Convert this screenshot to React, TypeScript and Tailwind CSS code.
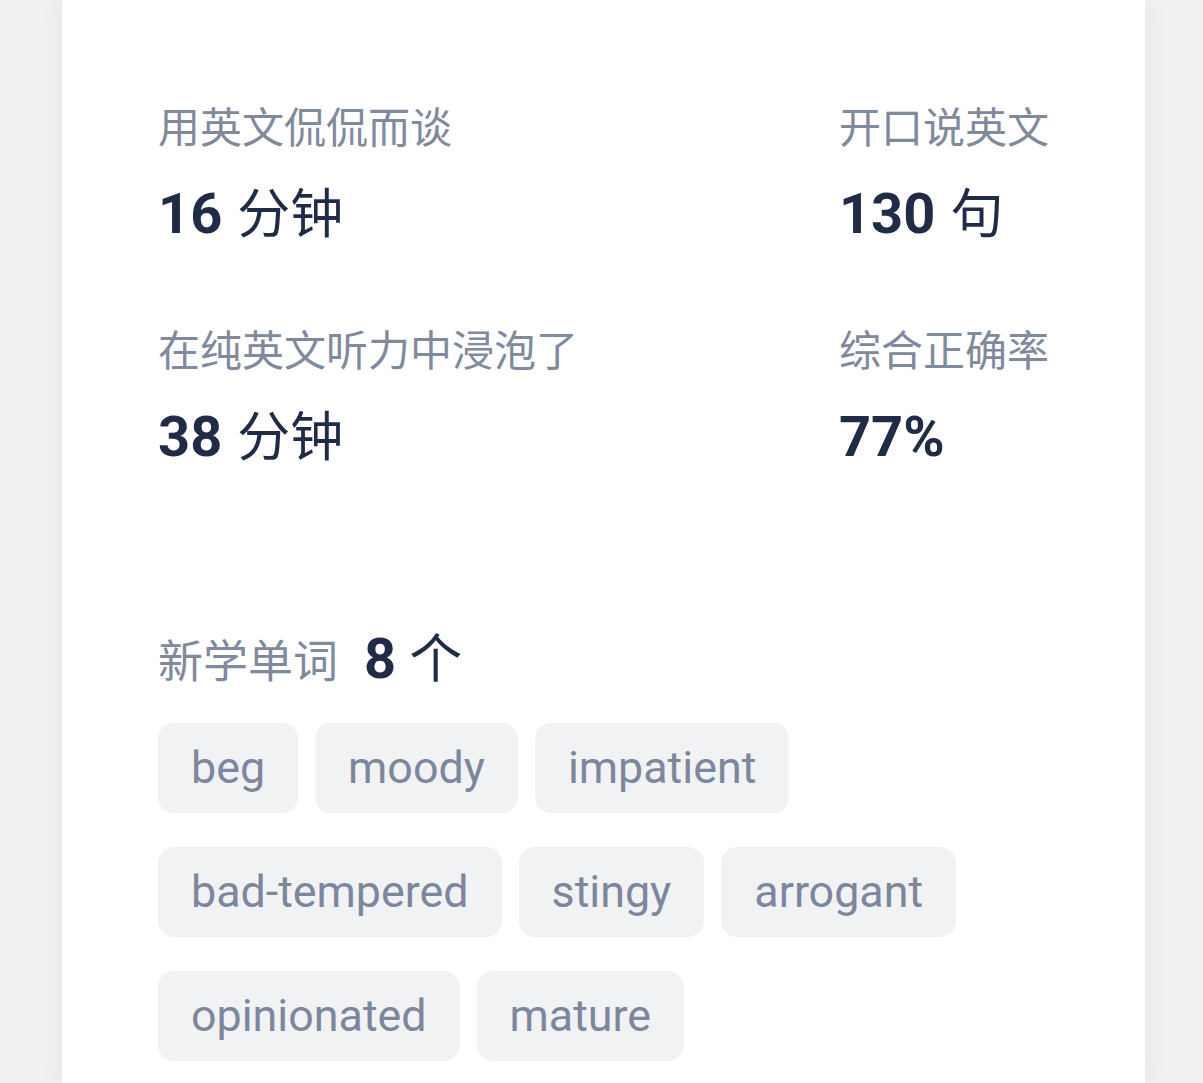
const sans = 'font-["Roboto","Noto_Sans_CJK_SC",sans-serif]';

const stats = [
  [
    { label: "用英文侃侃而谈", value: "16", unit: "分钟" },
    { label: "开口说英文", value: "130", unit: "句" },
  ],
  [
    { label: "在纯英文听力中浸泡了", value: "38", unit: "分钟" },
    { label: "综合正确率", value: "77%", unit: "" },
  ],
];

const words = ["beg", "moody", "impatient", "bad-tempered", "stingy", "arrogant", "opinionated", "mature"];

function Stat({ label, value, unit }: { label: string; value: string; unit: string }) {
  return (
    <div className="flex flex-col">
      <span className="text-[42px] leading-[63px] text-[#808a9e]">{label}</span>
      <div className="mt-[15px] flex h-[78px] items-baseline leading-[78px] text-[#1f2b47]">
        <span className="text-[56px] font-bold">{value}</span>
        {unit && <span className="ml-[15px] text-[53px] font-normal">{unit}</span>}
      </div>
    </div>
  );
}

export default function App() {
  return (
    <div className={`min-h-screen bg-[#f0f1f3] ${sans}`}>
      <div className="ml-[62px] min-h-screen w-[1083px] bg-white px-[96px] pt-[97px] shadow-[0_0_24px_rgba(0,0,0,0.06)]">
        <div className="flex flex-col gap-[67px]">
          {stats.map((row, i) => (
            <div key={i} className="flex justify-between">
              {row.map((s) => (
                <Stat key={s.label} {...s} />
              ))}
            </div>
          ))}
        </div>

        <div className="mt-[144px] flex h-[78px] items-baseline leading-[78px]">
          <span className="text-[45px] text-[#808a9e]">新学单词</span>
          <span className="ml-[26px] text-[56px] font-bold text-[#1f2b47]">8</span>
          <span className="ml-[13px] text-[53px] text-[#1f2b47]">个</span>
        </div>

        <div className="mt-[25px] flex flex-wrap gap-x-[17px] gap-y-[34px]">
          {words.map((w) => (
            <span
              key={w}
              className="flex h-[90px] items-center rounded-[16px] bg-[#f1f2f4] px-[33px] text-[44.8px] text-[#7b879c]"
            >
              {w}
            </span>
          ))}
        </div>
      </div>
    </div>
  );
}
